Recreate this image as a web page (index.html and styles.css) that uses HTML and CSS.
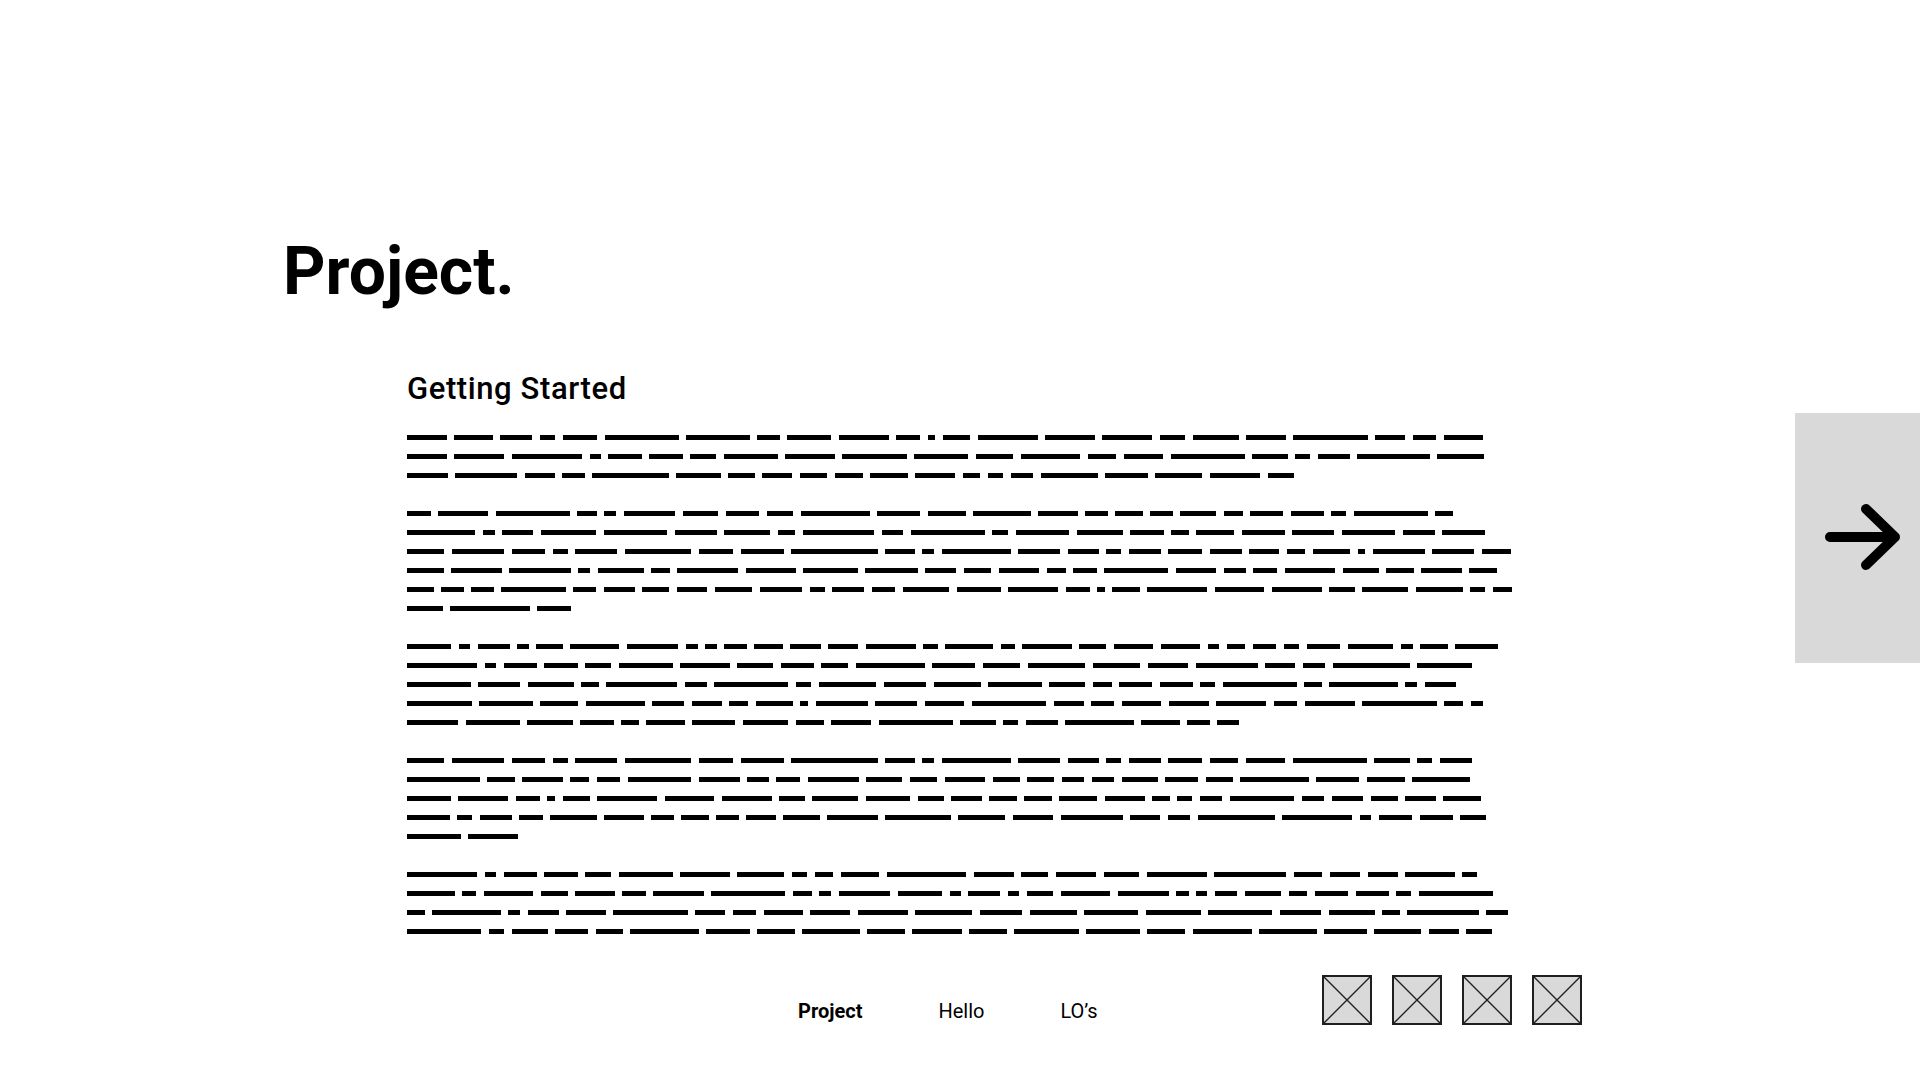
FILE: index.html
```html
<!DOCTYPE html>
<html lang="en">
<head>
<meta charset="utf-8">
<title>Project.</title>
<link rel="stylesheet" href="styles.css">
</head>
<body>
<div class="page">
  <main class="main">
    <h1 class="title">Project.</h1>
    <section class="content">
      <h2 class="subtitle">Getting Started</h2>
      <div class="redacted">
        <p><span>Lorem</span> <span>ipsum</span> <span>dolor</span> <span>sit</span> <span>amet,</span> <span>consectetur</span> <span>adipiscing</span> <span>elit.</span> <span>Integer</span> <span>posuere</span> <span>erat</span> <span>a</span> <span>ante</span> <span>venenatis</span> <span>dapibus</span> <span>posuere</span> <span>velit</span> <span>aliquet.</span> <span>Donec</span> <span>ullamcorper</span> <span>nulla</span> <span>non</span> <span>metus</span> <span>auctor</span> <span>fringilla.</span> <span>Vestibulum</span> <span>id</span> <span>ligula</span> <span>porta</span> <span>felis</span> <span>euismod</span> <span>semper.</span> <span>Maecenas</span> <span>faucibus</span> <span>mollis</span> <span>interdum.</span> <span>Cras</span> <span>mattis</span> <span>consectetur</span> <span>purus</span> <span>sit</span> <span>amet</span> <span>fermentum.</span> <span>Aenean</span> <span>lacinia</span> <span>bibendum</span> <span>nulla</span> <span>sed</span> <span>consectetur.</span> <span>Nullam</span> <span>quis</span> <span>risus</span> <span>eget</span> <span>urna</span> <span>mollis</span> <span>ornare</span> <span>vel</span> <span>eu</span> <span>leo.</span> <span>Curabitur</span> <span>blandit</span> <span>tempus</span> <span>porttitor</span> <span>nec.</span></p>
        <p><span>Sed</span> <span>posuere</span> <span>consectetur</span> <span>est</span> <span>at</span> <span>lobortis.</span> <span>Etiam</span> <span>porta</span> <span>sem</span> <span>malesuada</span> <span>magna</span> <span>mollis</span> <span>euismod.</span> <span>Donec</span> <span>sed</span> <span>odio</span> <span>dui.</span> <span>Morbi</span> <span>leo</span> <span>risus,</span> <span>porta</span> <span>ac</span> <span>consectetur</span> <span>ac,</span> <span>vestibulum</span> <span>at</span> <span>eros.</span> <span>Praesent</span> <span>commodo</span> <span>cursus</span> <span>magna,</span> <span>vel</span> <span>scelerisque</span> <span>nisl</span> <span>consectetur</span> <span>et.</span> <span>Vivamus</span> <span>sagittis</span> <span>lacus</span> <span>vel</span> <span>augue</span> <span>laoreet</span> <span>rutrum</span> <span>faucibus</span> <span>dolor</span> <span>auctor.</span> <span>Fusce</span> <span>dapibus,</span> <span>tellus</span> <span>ac</span> <span>cursus</span> <span>commodo,</span> <span>tortor</span> <span>mauris</span> <span>condimentum</span> <span>nibh,</span> <span>ut</span> <span>fermentum</span> <span>massa</span> <span>justo</span> <span>sit</span> <span>amet</span> <span>risus.</span> <span>Nulla</span> <span>vitae</span> <span>elit</span> <span>libero,</span> <span>a</span> <span>pharetra</span> <span>augue.</span> <span>Cum</span> <span>sociis</span> <span>natoque</span> <span>penatibus</span> <span>et</span> <span>magnis</span> <span>dis</span> <span>parturient</span> <span>montes,</span> <span>nascetur</span> <span>ridiculus</span> <span>mus.</span> <span>Duis</span> <span>mollis,</span> <span>est</span> <span>non</span> <span>commodo</span> <span>luctus,</span> <span>nisi</span> <span>erat</span> <span>porttitor</span> <span>ligula,</span> <span>eget</span> <span>lacinia</span> <span>odio</span> <span>sem</span> <span>nec</span> <span>elit.</span> <span>Maecenas</span> <span>sed</span> <span>diam</span> <span>eget</span> <span>risus</span> <span>varius</span> <span>blandit</span> <span>sit</span> <span>amet</span> <span>non</span> <span>magna.</span> <span>Integer</span> <span>posuere</span> <span>erat</span> <span>a</span> <span>ante</span> <span>venenatis</span> <span>dapibus</span> <span>posuere</span> <span>velit</span> <span>aliquet.</span> <span>Aenean</span> <span>eu</span> <span>leo</span> <span>quam</span> <span>pellentesque</span> <span>nulla.</span></p>
        <p><span>Nullam</span> <span>id</span> <span>dolor</span> <span>id</span> <span>nibh</span> <span>ultricies</span> <span>vehicula</span> <span>ut</span> <span>id</span> <span>elit.</span> <span>Cras</span> <span>justo</span> <span>odio,</span> <span>dapibus</span> <span>ac</span> <span>facilisis</span> <span>in,</span> <span>egestas</span> <span>eget</span> <span>quam.</span> <span>Donec</span> <span>id</span> <span>elit</span> <span>non</span> <span>mi</span> <span>porta</span> <span>gravida</span> <span>at</span> <span>eget</span> <span>metus.</span> <span>Vestibulum</span> <span>id</span> <span>ligula</span> <span>porta</span> <span>felis</span> <span>euismod</span> <span>semper.</span> <span>Etiam</span> <span>porta</span> <span>sem</span> <span>malesuada</span> <span>magna</span> <span>mollis</span> <span>euismod.</span> <span>Aenean</span> <span>lacinia</span> <span>bibendum</span> <span>nulla</span> <span>sed</span> <span>consectetur.</span> <span>Praesent</span> <span>commodo</span> <span>cursus</span> <span>magna,</span> <span>vel</span> <span>scelerisque</span> <span>nisl</span> <span>consectetur</span> <span>et.</span> <span>Curabitur</span> <span>blandit</span> <span>tempus</span> <span>porttitor.</span> <span>Morbi</span> <span>leo</span> <span>risus,</span> <span>porta</span> <span>ac</span> <span>consectetur</span> <span>ac,</span> <span>vestibulum</span> <span>at</span> <span>eros.</span> <span>Maecenas</span> <span>faucibus</span> <span>mollis</span> <span>interdum.</span> <span>Nulla</span> <span>vitae</span> <span>elit</span> <span>libero,</span> <span>a</span> <span>pharetra</span> <span>augue.</span> <span>Donec</span> <span>ullamcorper</span> <span>nulla</span> <span>non</span> <span>metus</span> <span>auctor</span> <span>fringilla.</span> <span>Sed</span> <span>posuere</span> <span>consectetur</span> <span>est</span> <span>at</span> <span>lobortis.</span> <span>Vivamus</span> <span>sagittis</span> <span>lacus</span> <span>vel</span> <span>augue</span> <span>laoreet</span> <span>rutrum.</span> <span>Cras</span> <span>mattis</span> <span>consectetur</span> <span>purus</span> <span>sit</span> <span>amet</span> <span>fermentum</span> <span>donec</span> <span>sed</span> <span>vel.</span></p>
        <p><span>Fusce</span> <span>dapibus,</span> <span>tellus</span> <span>ac</span> <span>cursus</span> <span>commodo,</span> <span>tortor</span> <span>mauris</span> <span>condimentum</span> <span>nibh,</span> <span>ut</span> <span>fermentum</span> <span>massa</span> <span>justo</span> <span>sit</span> <span>amet</span> <span>risus.</span> <span>Cras</span> <span>mattis</span> <span>consectetur</span> <span>purus</span> <span>sit</span> <span>amet</span> <span>fermentum.</span> <span>Duis</span> <span>mollis,</span> <span>est</span> <span>non</span> <span>commodo</span> <span>luctus,</span> <span>nisi</span> <span>erat</span> <span>porttitor</span> <span>ligula,</span> <span>eget</span> <span>lacinia</span> <span>odio</span> <span>sem</span> <span>nec</span> <span>elit.</span> <span>Etiam</span> <span>porta</span> <span>sem</span> <span>malesuada</span> <span>magna</span> <span>mollis</span> <span>euismod.</span> <span>Integer</span> <span>posuere</span> <span>erat</span> <span>a</span> <span>ante</span> <span>venenatis</span> <span>dapibus</span> <span>posuere</span> <span>velit</span> <span>aliquet.</span> <span>Nullam</span> <span>quis</span> <span>risus</span> <span>eget</span> <span>urna</span> <span>mollis</span> <span>ornare</span> <span>vel</span> <span>eu</span> <span>leo.</span> <span>Maecenas</span> <span>sed</span> <span>diam</span> <span>eget</span> <span>risus</span> <span>varius</span> <span>blandit</span> <span>sit</span> <span>amet</span> <span>non</span> <span>magna.</span> <span>Donec</span> <span>sed</span> <span>odio</span> <span>dui.</span> <span>Cum</span> <span>sociis</span> <span>natoque</span> <span>penatibus.</span> <span>Aenean</span> <span>lacinia</span> <span>bibendum</span> <span>nulla</span> <span>sed</span> <span>consectetur.</span> <span>Vestibulum</span> <span>id</span> <span>ligula</span> <span>porta</span> <span>felis</span> <span>euismod</span> <span>semper.</span></p>
        <p><span>Vestibulum</span> <span>id</span> <span>ligula</span> <span>porta</span> <span>felis</span> <span>euismod</span> <span>semper.</span> <span>Aenean</span> <span>eu</span> <span>leo</span> <span>quam,</span> <span>pellentesque</span> <span>ornare</span> <span>sem</span> <span>lacinia</span> <span>quam</span> <span>venenatis</span> <span>vestibulum.</span> <span>Cras</span> <span>justo</span> <span>odio,</span> <span>dapibus</span> <span>ac</span> <span>facilisis</span> <span>in,</span> <span>egestas</span> <span>eget</span> <span>quam.</span> <span>Sed</span> <span>posuere</span> <span>consectetur</span> <span>est</span> <span>at</span> <span>lobortis.</span> <span>Nullam</span> <span>id</span> <span>dolor</span> <span>id</span> <span>nibh</span> <span>ultricies</span> <span>vehicula</span> <span>ut</span> <span>id</span> <span>elit.</span> <span>Morbi</span> <span>leo</span> <span>risus,</span> <span>porta</span> <span>ac</span> <span>consectetur</span> <span>ac,</span> <span>vestibulum</span> <span>at</span> <span>eros.</span> <span>Donec</span> <span>ullamcorper</span> <span>nulla</span> <span>non</span> <span>metus</span> <span>auctor</span> <span>fringilla.</span> <span>Curabitur</span> <span>blandit</span> <span>tempus</span> <span>porttitor.</span> <span>Praesent</span> <span>commodo</span> <span>cursus</span> <span>magna,</span> <span>vel</span> <span>scelerisque</span> <span>nisl</span> <span>consectetur</span> <span>et.</span> <span>Etiam</span> <span>porta</span> <span>sem</span> <span>malesuada</span> <span>magna</span> <span>mollis</span> <span>euismod.</span> <span>Fusce</span> <span>dapibus</span> <span>tellus.</span> <span>Maecenas</span> <span>faucibus</span> <span>mollis</span> <span>interdum.</span> <span>Curabitur</span> <span>blandit</span> <span>tempus</span> <span>nulla</span> <span>sed.</span></p>
      </div>
    </section>
    <footer class="footer">
      <nav class="nav">
        <a class="nav-item is-active" href="#">Project</a>
        <a class="nav-item" href="#">Hello</a>
        <a class="nav-item" href="#">LO’s</a>
      </nav>
      <div class="thumbs">
        <svg class="thumb" viewBox="0 0 50 50" width="50" height="50"><rect x="1" y="1" width="48" height="48"/><path d="M1 1L49 49M49 1L1 49"/></svg>
        <svg class="thumb" viewBox="0 0 50 50" width="50" height="50"><rect x="1" y="1" width="48" height="48"/><path d="M1 1L49 49M49 1L1 49"/></svg>
        <svg class="thumb" viewBox="0 0 50 50" width="50" height="50"><rect x="1" y="1" width="48" height="48"/><path d="M1 1L49 49M49 1L1 49"/></svg>
        <svg class="thumb" viewBox="0 0 50 50" width="50" height="50"><rect x="1" y="1" width="48" height="48"/><path d="M1 1L49 49M49 1L1 49"/></svg>
      </div>
    </footer>
  </main>
  <aside class="next">
    <svg class="next-arrow" viewBox="0 0 125 250" width="125" height="250"><path d="M35 124H100M71 96L100 124L71 152"/></svg>
  </aside>
</div>
</body>
</html>
```

FILE: styles.css
```css
* { box-sizing: border-box; }

html, body {
  margin: 0;
  padding: 0;
  background: #ffffff;
}

body {
  font-family: Roboto, "Liberation Sans", Arial, sans-serif;
  color: #000000;
}

.page {
  display: flex;
  width: 1920px;
  min-height: 1080px;
}

.main {
  flex: 1;
  padding-left: 283px;
  padding-top: 239px;
}

.title {
  margin: 0;
  font-size: 66px;
  line-height: 66px;
  font-weight: 700;
}

.content {
  margin-top: 69px;
  padding-left: 124px;
}

.subtitle {
  margin: 0;
  font-size: 31px;
  line-height: 30px;
  font-weight: 500;
  letter-spacing: 0.6px;
}

.redacted {
  margin-top: 24px;
  width: 1106px;
}

.redacted p {
  margin: 0 0 19px;
  font-size: 14px;
  line-height: 19px;
  word-spacing: 4px;
}

.redacted p:last-child {
  margin-bottom: 0;
}

.redacted span {
  color: transparent;
  background-image: linear-gradient(#000000, #000000);
  background-repeat: no-repeat;
  background-position: 0 50%;
  background-size: 100% 5px;
}

.footer {
  display: flex;
  align-items: flex-end;
  margin-top: 34px;
  padding-left: 515px;
}

.nav {
  display: flex;
  gap: 76px;
  margin-bottom: 2px;
}

.nav-item {
  font-size: 20px;
  line-height: 24px;
  font-weight: 400;
  color: #000000;
  text-decoration: none;
}

.nav-item.is-active {
  font-weight: 700;
}

.thumbs {
  display: flex;
  gap: 20px;
  margin-left: 224px;
}

.thumb {
  display: block;
}

.thumb rect {
  fill: #d9d9d9;
  stroke: #1f1f1f;
  stroke-width: 2;
}

.thumb path {
  fill: none;
  stroke: #1f1f1f;
  stroke-width: 1.4;
}

.next {
  width: 125px;
  height: 250px;
  margin-top: 413px;
  background: #d9d9d9;
  flex: none;
}

.next-arrow {
  display: block;
}

.next-arrow path {
  fill: none;
  stroke: #000000;
  stroke-width: 10;
  stroke-linecap: round;
  stroke-linejoin: round;
}
```
